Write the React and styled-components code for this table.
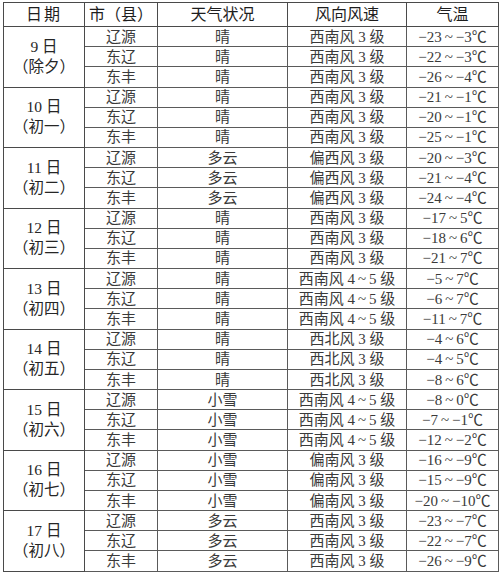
import React from "react";
import styled, { createGlobalStyle } from "styled-components";

const GlobalStyle = createGlobalStyle`
    html, body {
        margin: 0;
        padding: 0;
        background: #ffffff;
    }
`;

const Page = styled.div`
    width: 500px;
    height: 575px;
    padding: 2px 0 0 3px;
    box-sizing: border-box;
    background: #ffffff;
`;

const Table = styled.table`
    width: 495px;
    border-collapse: collapse;
    table-layout: fixed;
    font-family: "Liberation Serif", "Noto Sans CJK SC", serif;
    color: #333;
`;

const HeadRow = styled.tr`
    height: 24px;
`;

const Row = styled.tr`
    height: 20.18px;
`;

const HeadCell = styled.th`
    border: 1px solid #4a4a4a;
    padding: 0;
    font-size: 16px;
    font-weight: 400;
    color: #1e1e1e;
    text-align: center;
    line-height: 22px;
    letter-spacing: ${({ $spread }) => ($spread ? "2px" : "0")};
`;

const DateCell = styled.td`
    border: 1px solid #4a4a4a;
    padding: 0;
    text-align: center;
    vertical-align: middle;
    font-size: 15.5px;
    line-height: 20px;
    color: #262626;
`;

const Cell = styled.td`
    border: 1px solid #5a5a5a;
    padding: 0;
    text-align: center;
    font-size: 15px;
    line-height: 18px;
    color: #3a3a3a;
    white-space: nowrap;
    overflow: hidden;
`;

const Line = styled.div`
    display: block;
`;

const cities = ["辽源", "东辽", "东丰"];

// thin spaces around the tilde, as in the printed table
const t = (a, b) => `${a}\u2009~\u2009${b}℃`;
const w = (dir, level) => `${dir} ${level} 级`;
const lv45 = "4\u2009~\u20095";

const days = [
    { d: "9", lunar: "除夕", rows: [
        ["晴", w("西南风", 3), t("−23", "−3")],
        ["晴", w("西南风", 3), t("−22", "−3")],
        ["晴", w("西南风", 3), t("−26", "−4")],
    ] },
    { d: "10", lunar: "初一", rows: [
        ["晴", w("西南风", 3), t("−21", "−1")],
        ["晴", w("西南风", 3), t("−20", "−1")],
        ["晴", w("西南风", 3), t("−25", "−1")],
    ] },
    { d: "11", lunar: "初二", rows: [
        ["多云", w("偏西风", 3), t("−20", "−3")],
        ["多云", w("偏西风", 3), t("−21", "−4")],
        ["多云", w("偏西风", 3), t("−24", "−4")],
    ] },
    { d: "12", lunar: "初三", rows: [
        ["晴", w("西南风", 3), t("−17", "5")],
        ["晴", w("西南风", 3), t("−18", "6")],
        ["晴", w("西南风", 3), t("−21", "7")],
    ] },
    { d: "13", lunar: "初四", rows: [
        ["晴", w("西南风", lv45), t("−5", "7")],
        ["晴", w("西南风", lv45), t("−6", "7")],
        ["晴", w("西南风", lv45), t("−11", "7")],
    ] },
    { d: "14", lunar: "初五", rows: [
        ["晴", w("西北风", 3), t("−4", "6")],
        ["晴", w("西北风", 3), t("−4", "5")],
        ["晴", w("西北风", 3), t("−8", "6")],
    ] },
    { d: "15", lunar: "初六", rows: [
        ["小雪", w("西南风", lv45), t("−8", "0")],
        ["小雪", w("西南风", lv45), t("−7", "−1")],
        ["小雪", w("西南风", lv45), t("−12", "−2")],
    ] },
    { d: "16", lunar: "初七", rows: [
        ["小雪", w("偏南风", 3), t("−16", "−9")],
        ["小雪", w("偏南风", 3), t("−15", "−9")],
        ["小雪", w("偏南风", 3), t("−20", "−10")],
    ] },
    { d: "17", lunar: "初八", rows: [
        ["多云", w("西南风", 3), t("−23", "−7")],
        ["多云", w("西南风", 3), t("−22", "−7")],
        ["多云", w("西南风", 3), t("−26", "−9")],
    ] },
];

const App = () => {
    return (
        <>
            <GlobalStyle />
            <Page>
                <Table>
                    <colgroup>
                        <col style={{ width: 81 }} />
                        <col style={{ width: 73 }} />
                        <col style={{ width: 130 }} />
                        <col style={{ width: 119 }} />
                        <col style={{ width: 92 }} />
                    </colgroup>
                    <thead>
                        <HeadRow>
                            <HeadCell $spread>日期</HeadCell>
                            <HeadCell>市（县）</HeadCell>
                            <HeadCell>天气状况</HeadCell>
                            <HeadCell>风向风速</HeadCell>
                            <HeadCell>气温</HeadCell>
                        </HeadRow>
                    </thead>
                    <tbody>
                        {days.map((day) =>
                            day.rows.map((r, i) => (
                                <Row key={day.d + i}>
                                    {i === 0 && (
                                        <DateCell rowSpan={3}>
                                            <Line>{day.d} 日</Line>
                                            <Line>（{day.lunar}）</Line>
                                        </DateCell>
                                    )}
                                    <Cell>{cities[i]}</Cell>
                                    <Cell>{r[0]}</Cell>
                                    <Cell>{r[1]}</Cell>
                                    <Cell>{r[2]}</Cell>
                                </Row>
                            ))
                        )}
                    </tbody>
                </Table>
            </Page>
        </>
    );
};

export default App;
